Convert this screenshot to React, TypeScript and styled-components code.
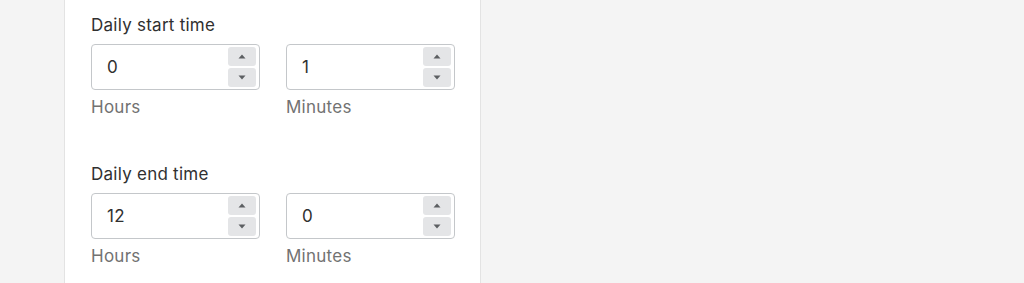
import { styled, createGlobalStyle } from "styled-components";

const GlobalStyle = createGlobalStyle`
  html, body {
    margin: 0;
    padding: 0;
    background: #f4f4f4;
    font-family: Inter, "Liberation Sans", Arial, sans-serif;
  }
`;

type TimeField = { value: string; helper: string };
type TimeSetting = { label: string; fields: TimeField[] };

const settings: TimeSetting[] = [
  {
    label: "Daily start time",
    fields: [
      { value: "0", helper: "Hours" },
      { value: "1", helper: "Minutes" },
    ],
  },
  {
    label: "Daily end time",
    fields: [
      { value: "12", helper: "Hours" },
      { value: "0", helper: "Minutes" },
    ],
  },
];

const Spinner = (): JSX.Element => {
  return (
    <SpinnerS>
      <SpinBtnS>
        <svg width="8" height="5" viewBox="0 0 8 5">
          <path d="M4 0.5 L7.5 4.5 H0.5 Z" fill="#5c5f62" />
        </svg>
      </SpinBtnS>
      <SpinBtnS>
        <svg width="8" height="5" viewBox="0 0 8 5">
          <path d="M4 4.5 L7.5 0.5 H0.5 Z" fill="#5c5f62" />
        </svg>
      </SpinBtnS>
    </SpinnerS>
  );
};

const App = (): JSX.Element => {
  return (
    <>
      <GlobalStyle />
      <PageS>
        <PanelS>
          {settings.map((s) => (
            <SectionS key={s.label}>
              <LabelS>{s.label}</LabelS>
              <RowS>
                {s.fields.map((f) => (
                  <FieldS key={f.helper}>
                    <InputBoxS>
                      <ValueS>{f.value}</ValueS>
                      <Spinner />
                    </InputBoxS>
                    <HelperS>{f.helper}</HelperS>
                  </FieldS>
                ))}
              </RowS>
            </SectionS>
          ))}
        </PanelS>
      </PageS>
    </>
  );
};

export default App;

const PageS = styled.main`
  display: flex;
  min-height: 283px;
  padding-left: 64px;
`;

const PanelS = styled.section`
  width: 364px;
  background: #ffffff;
  border-left: 1px solid #e3e3e3;
  border-right: 1px solid #e3e3e3;
  padding: 14px 25px 0 26px;
  display: flex;
  flex-direction: column;
  gap: 45px;
`;

const SectionS = styled.div`
  display: flex;
  flex-direction: column;
`;

const LabelS = styled.div`
  font-size: 17px;
  letter-spacing: 0.25px;
  line-height: 22px;
  color: #303030;
  margin-bottom: 8px;
`;

const RowS = styled.div`
  display: grid;
  grid-template-columns: 169px 169px;
  gap: 26px;
`;

const FieldS = styled.div`
  display: flex;
  flex-direction: column;
`;

const InputBoxS = styled.div`
  box-sizing: border-box;
  height: 46px;
  border: 1px solid #c4c7ca;
  border-radius: 4px;
  display: flex;
  align-items: center;
  justify-content: space-between;
  padding: 0 3px 0 15px;
`;

const ValueS = styled.span`
  font-size: 17px;
  letter-spacing: 0.25px;
  color: #303030;
`;

const SpinnerS = styled.div`
  display: flex;
  flex-direction: column;
  gap: 2px;
`;

const SpinBtnS = styled.div`
  width: 28px;
  height: 19px;
  border-radius: 3px;
  background: #e4e5e7;
  display: flex;
  align-items: center;
  justify-content: center;
`;

const HelperS = styled.div`
  font-size: 17px;
  letter-spacing: 0.25px;
  line-height: 22px;
  color: #727272;
  margin-top: 6px;
`;
